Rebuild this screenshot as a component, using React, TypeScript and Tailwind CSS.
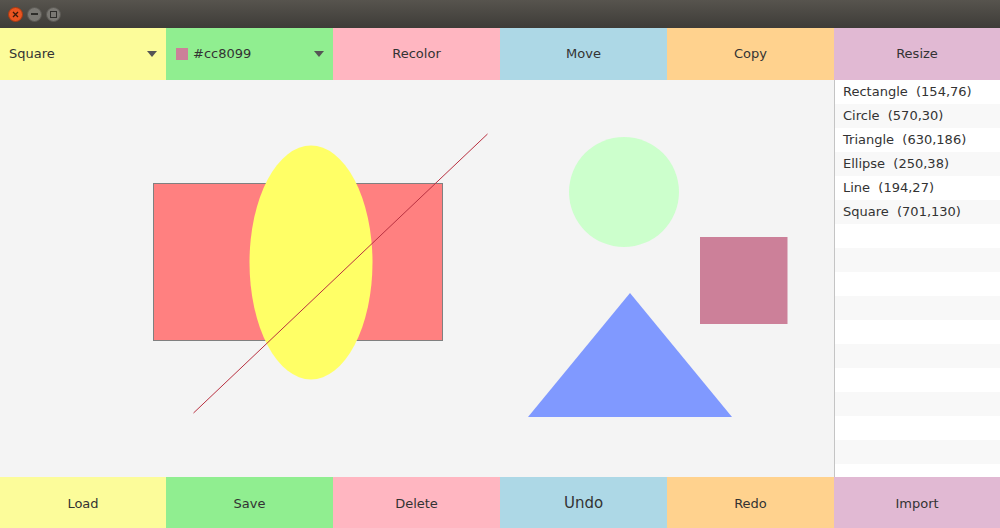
import React from 'react';

const shapes = [
  { name: 'Rectangle', pos: '(154,76)' },
  { name: 'Circle', pos: '(570,30)' },
  { name: 'Triangle', pos: '(630,186)' },
  { name: 'Ellipse', pos: '(250,38)' },
  { name: 'Line', pos: '(194,27)' },
  { name: 'Square', pos: '(701,130)' },
];

const Arrow: React.FC = () => (
  <svg width="10" height="6" viewBox="0 0 10 6" className="shrink-0">
    <path d="M0 0 L10 0 L5 6 Z" fill="#555" />
  </svg>
);

const TitleBar: React.FC = () => (
  <div className="h-[28px] flex items-center gap-[4px] pl-[8px] bg-gradient-to-b from-[#57544e] to-[#3e3c38]">
    <div className="w-[15px] h-[15px] rounded-full bg-[#e95420] border border-[#a83a12] flex items-center justify-center">
      <svg width="7" height="7" viewBox="0 0 7 7">
        <path d="M1 1 L6 6 M6 1 L1 6" stroke="#3a1a0a" strokeWidth="1.3" />
      </svg>
    </div>
    <div className="w-[15px] h-[15px] rounded-full bg-[#7a7873] border border-[#5a5853] flex items-center justify-center">
      <div className="w-[7px] h-[1.5px] bg-[#2e2d2a]" />
    </div>
    <div className="w-[15px] h-[15px] rounded-full bg-[#7a7873] border border-[#5a5853] flex items-center justify-center">
      <div className="w-[7px] h-[7px] border border-[#2e2d2a]" />
    </div>
  </div>
);

const Btn: React.FC<{ label: string; bg: string; big?: boolean; low?: boolean }> = ({ label, bg, big, low }) => (
  <div
    className={`${bg} flex items-center justify-center text-[#333] ${big ? 'text-[15px]' : 'text-[13px]'} ${low ? 'pt-[2px]' : ''}`}
  >
    {label}
  </div>
);

const App: React.FC = () => {
  return (
    <div className="w-[1000px] h-[528px] flex flex-col bg-[#f4f4f4] overflow-hidden font-['DejaVu_Sans',sans-serif]">
      <TitleBar />

      <div className="h-[52px] grid grid-cols-[166px_167px_167px_167px_167px_166px]">
        <div className="bg-[#fcfc9a] flex items-center justify-between pl-[9px] pr-[9px] text-[13px] text-[#333]">
          <span>Square</span>
          <Arrow />
        </div>
        <div className="bg-[#90ee90] flex items-center justify-between pl-[10px] pr-[9px] text-[13px] text-[#333]">
          <div className="flex items-center gap-[5px]">
            <div className="w-[12px] h-[12px] bg-[#cc8099]" />
            <span>#cc8099</span>
          </div>
          <Arrow />
        </div>
        <Btn label="Recolor" bg="bg-[#ffb6c1]" />
        <Btn label="Move" bg="bg-[#add8e6]" />
        <Btn label="Copy" bg="bg-[#ffd28e]" />
        <Btn label="Resize" bg="bg-[#e1b9d3]" />
      </div>

      <div className="flex-1 flex min-h-0">
        <div className="w-[834px] relative">
          <svg width="834" height="397" className="absolute inset-0">
            <g transform="translate(0,-1)">
              <rect x="153.5" y="104.5" width="289" height="157" fill="#ff8080" stroke="#808080" strokeWidth="1" />
              <ellipse cx="311" cy="183.5" rx="61.5" ry="117" fill="#ffff66" />
              <line x1="193.5" y1="334" x2="487.5" y2="55" stroke="#b83040" strokeWidth="1" />
              <circle cx="624" cy="113" r="55" fill="#ccffcc" />
              <rect x="700" y="158" width="87.5" height="87" fill="#cc8099" />
              <polygon points="630,214 528,338 732,338" fill="#8099ff" />
            </g>
          </svg>
        </div>
        <div className="flex-1 border-l border-[#c4c4c4] bg-white flex flex-col overflow-hidden">
          {Array.from({ length: 17 }).map((_, i) => (
            <div
              key={i}
              className={`h-[24px] shrink-0 flex items-center pl-[8px] text-[13px] text-[#333] ${i % 2 === 0 ? 'bg-white' : 'bg-[#f8f8f8]'}`}
            >
              {shapes[i] ? (
                <span className="whitespace-pre">{shapes[i].name + '  ' + shapes[i].pos}</span>
              ) : null}
            </div>
          ))}
        </div>
      </div>

      <div className="h-[51px] grid grid-cols-[166px_167px_167px_167px_167px_166px]">
        <Btn label="Load" bg="bg-[#fcfc9a]" low />
        <Btn label="Save" bg="bg-[#90ee90]" low />
        <Btn label="Delete" bg="bg-[#ffb6c1]" low />
        <Btn label="Undo" bg="bg-[#add8e6]" big low />
        <Btn label="Redo" bg="bg-[#ffd28e]" low />
        <Btn label="Import" bg="bg-[#e1b9d3]" low />
      </div>
    </div>
  );
};

export default App;
